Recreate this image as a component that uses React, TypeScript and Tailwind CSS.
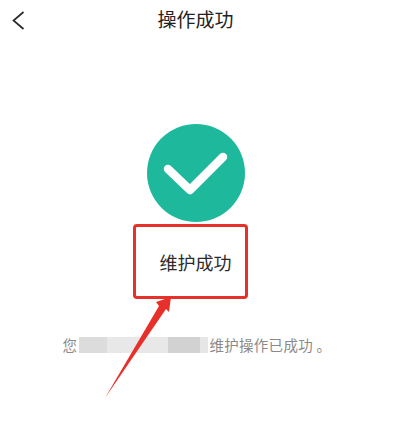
const cjk = "font-['Noto_Sans_CJK_SC','Noto_Sans',sans-serif]";

export default function App() {
  return (
    <div className={`relative flex h-[430px] w-[407px] flex-col items-center overflow-hidden bg-white ${cjk}`}>
      <header className="relative flex h-[38px] w-full items-center justify-center">
        <svg className="absolute left-[10px] top-[10px] h-[21px] w-[16px]" viewBox="0 0 16 21" fill="none">
          <path d="M13.5 2 L3.5 10.5 L13.5 19" stroke="#2a2a2a" strokeWidth="1.7" />
        </svg>
        <h1 className="ml-[-16px] text-[19px] font-normal leading-[26px] text-[#222]">操作成功</h1>
      </header>

      <div className="ml-[-15px] mt-[86px] flex h-[98px] w-[98px] items-center justify-center rounded-full bg-[#1eb99c]">
        <svg className="h-[98px] w-[98px]" viewBox="0 0 98 98" fill="none">
          <path d="M21 45 L43 66 L76 33" stroke="#ffffff" strokeWidth="8.5" strokeLinecap="round" strokeLinejoin="round" />
        </svg>
      </div>

      <div className="ml-[-27px] mt-[2px] flex h-[75px] w-[115px] items-center justify-center rounded-[4px] border-[3px] border-[#e8302a] pl-[11px] pt-[1px]">
        <p className="text-[18px] leading-[24px] text-[#2b2b2b]">维护成功</p>
      </div>

      <div className="ml-[-13px] mt-[35px] flex items-center text-[14.5px] leading-[22px] tracking-[0.3px] text-[#8a8a8a]">
        <span>您</span>
        <div className="ml-[2px] mr-[1px] flex h-[16px] w-[129px]">
          <div className="w-[28px] bg-[#dcdcdc]" />
          <div className="w-[61px] bg-[#e8e8e8]" />
          <div className="w-[32px] bg-[#d2d2d2]" />
          <div className="w-[8px] bg-[#e6e6e6]" />
        </div>
        <span>维护操作已成功 。</span>
      </div>

      {/* arrow annotation */}
      <svg className="absolute left-[100px] top-[290px] h-[115px] w-[80px]" viewBox="0 0 80 115">
        <path d="M5 108 L59 16 L56 12 L71 7 L69 22 L66 19 Z" fill="#e8302a" />
      </svg>
    </div>
  );
}
